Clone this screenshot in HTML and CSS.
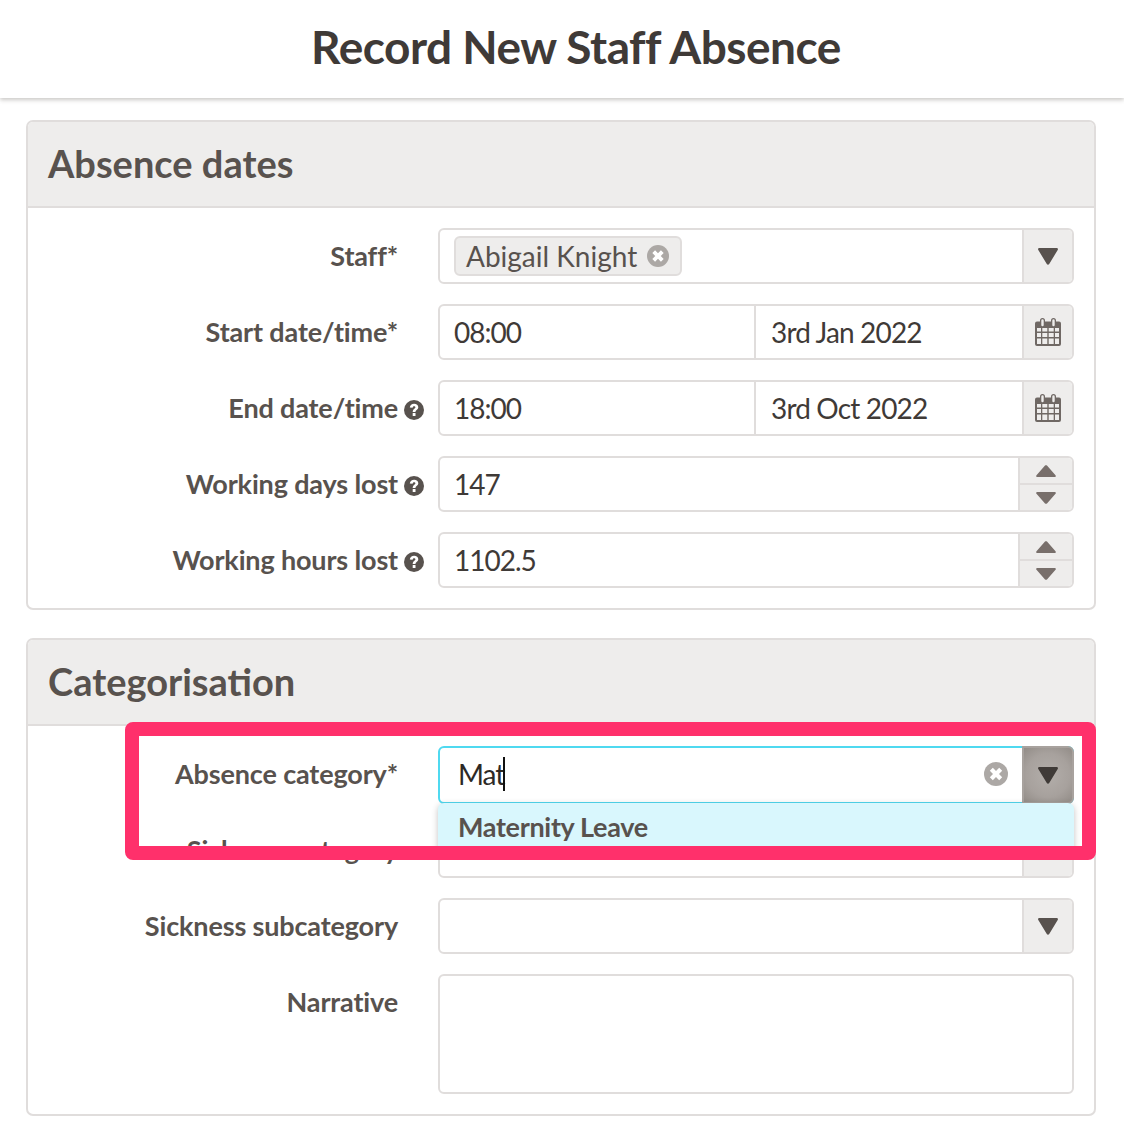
FILE: index.html
```html
<!DOCTYPE html>
<html lang="en">
<head>
<meta charset="utf-8">
<title>Record New Staff Absence</title>
<link rel="stylesheet" href="styles.css">
</head>
<body>
<svg class="defs" width="0" height="0" aria-hidden="true">
  <defs>
    <symbol id="caret" viewBox="0 0 20 17"><path d="M1.500 0H18.500C19.700 0 20.300 1 19.700 2L11.200 16C10.600 17 9.400 17 8.800 16L0.300 2C-0.300 1 0.300 0 1.500 0Z"/></symbol>
    <symbol id="spin-caret" viewBox="0 0 20 12" preserveAspectRatio="none"><path d="M1.500 0H18.500C19.700 0 20.300 1 19.500 1.800L11 11.400C10.400 12 9.600 12 9 11.400L0.500 1.800C-0.300 1 0.300 0 1.500 0Z"/></symbol>
    <symbol id="calendar" viewBox="0 0 26 28">
      <path fill="currentColor" d="M2 3.500H5V2.500a2.500 2.500 0 0 1 5 0V3.500H16V2.500a2.500 2.500 0 0 1 5 0V3.500H24a2 2 0 0 1 2 2V26a2 2 0 0 1-2 2H2a2 2 0 0 1-2-2V5.500a2 2 0 0 1 2-2Z"/>
      <path fill="#eeedec" d="M6.300 2.500a1.200 1.200 0 0 1 2.400 0V7a1.200 1.200 0 0 1-2.400 0ZM17.300 2.500a1.200 1.200 0 0 1 2.400 0V7a1.200 1.200 0 0 1-2.400 0Z"/>
      <path fill="#eeedec" d="M2 10H6V13.500H2ZM7.300 10H12.300V13.500H7.300ZM13.700 10H18.700V13.500H13.700ZM20 10H24V13.500H20ZM2 15H6V19H2ZM7.300 15H12.300V19H7.300ZM13.700 15H18.700V19H13.700ZM20 15H24V19H20ZM2 20.500H6V26H2ZM7.300 20.500H12.300V26H7.300ZM13.700 20.500H18.700V26H13.700ZM20 20.500H24V26H20Z"/>
    </symbol>
    <symbol id="help" viewBox="0 0 20 20">
      <circle cx="10" cy="10" r="10" fill="currentColor"/>
      <path d="M5.800 7.500C6 5 7.800 3.700 10.100 3.700C12.500 3.700 14.300 5.100 14.300 7.200C14.300 9.800 11.500 9.900 11.500 12H8.700C8.700 8.900 11.400 8.900 11.400 7.300C11.400 6.600 10.900 6.200 10 6.200C9.200 6.200 8.700 6.800 8.600 7.800ZM8.700 13.100H11.500V16H8.700Z" fill="#fff"/>
    </symbol>
    <symbol id="clear" viewBox="0 0 24 24">
      <circle cx="12" cy="12" r="12" fill="currentColor"/>
      <path d="M5.800 8.800L8.800 5.800L12 9L15.200 5.800L18.200 8.800L15 12L18.200 15.200L15.200 18.200L12 15L8.800 18.200L5.800 15.200L9 12Z" fill="#fff"/>
    </symbol>
  </defs>
</svg>

<header class="top-bar"><h1 class="page-title">Record New Staff Absence</h1></header>

<main class="content">
  <section class="panel">
    <h2 class="panel-title">Absence dates</h2>
    <div class="panel-body">
      <div class="row">
        <label class="label">Staff*</label>
        <div class="field">
          <div class="value tag-wrap">
            <span class="tag">Abigail Knight<svg class="tag-x"><use href="#clear"/></svg></span>
          </div>
          <span class="addon"><svg class="caret"><use href="#caret"/></svg></span>
        </div>
      </div>
      <div class="row">
        <label class="label">Start date/time*</label>
        <div class="field">
          <div class="value num time">08:00</div>
          <div class="value date">3rd Jan 2022</div>
          <span class="addon"><svg class="cal"><use href="#calendar"/></svg></span>
        </div>
      </div>
      <div class="row">
        <label class="label">End date/time</label>
        <svg class="help"><use href="#help"/></svg>
        <div class="field">
          <div class="value num time">18:00</div>
          <div class="value date">3rd Oct 2022</div>
          <span class="addon"><svg class="cal"><use href="#calendar"/></svg></span>
        </div>
      </div>
      <div class="row">
        <label class="label">Working days lost</label>
        <svg class="help"><use href="#help"/></svg>
        <div class="field">
          <div class="value num">147</div>
          <div class="spinner">
            <span class="spin"><svg class="spin-caret up"><use href="#spin-caret"/></svg></span>
            <span class="spin"><svg class="spin-caret"><use href="#spin-caret"/></svg></span>
          </div>
        </div>
      </div>
      <div class="row">
        <label class="label">Working hours lost</label>
        <svg class="help"><use href="#help"/></svg>
        <div class="field">
          <div class="value num">1102.5</div>
          <div class="spinner">
            <span class="spin"><svg class="spin-caret up"><use href="#spin-caret"/></svg></span>
            <span class="spin"><svg class="spin-caret"><use href="#spin-caret"/></svg></span>
          </div>
        </div>
      </div>
    </div>
  </section>

  <section class="panel">
    <h2 class="panel-title">Categorisation</h2>
    <div class="panel-body">
      <div class="row">
        <label class="label">Absence category*</label>
        <div class="field focused">
          <div class="value typed"><span class="typed-text">Mat</span><span class="cursor"></span></div>
          <svg class="clear"><use href="#clear"/></svg>
          <span class="addon active"><svg class="caret"><use href="#caret"/></svg></span>
          <div class="menu">Maternity Leave</div>
        </div>
      </div>
      <div class="row">
        <label class="label">Sickness category</label>
        <div class="field">
          <div class="value"></div>
          <span class="addon"><svg class="caret"><use href="#caret"/></svg></span>
        </div>
      </div>
      <div class="row">
        <label class="label">Sickness subcategory</label>
        <div class="field">
          <div class="value"></div>
          <span class="addon"><svg class="caret"><use href="#caret"/></svg></span>
        </div>
      </div>
      <div class="row row-tall">
        <label class="label">Narrative</label>
        <div class="field"><div class="value"></div></div>
      </div>
    </div>
  </section>
</main>

<div class="highlight"></div>
</body>
</html>
```

FILE: styles.css
```css
* { box-sizing: border-box; }
html, body { margin: 0; padding: 0; }
body {
  position: relative;
  width: 1124px;
  height: 1130px;
  overflow: hidden;
  background: #fff;
  font-family: "Lato", "Open Sans", sans-serif;
  color: #3f3a37;
}
.defs { position: absolute; }

.top-bar {
  height: 98px;
  background: #fff;
  display: flex;
  align-items: center;
  justify-content: center;
  box-shadow: 0 2px 4px rgba(70, 60, 55, 0.28);
  padding: 0 0 4px 28px;
}
.page-title {
  margin: 0;
  font-size: 46px;
  letter-spacing: -0.5px;
  line-height: 1;
  font-weight: 700;
  color: #3f3a37;
}

.content {
  padding: 22px 28px 0 26px;
  display: flex;
  flex-direction: column;
  gap: 28px;
}
.panel {
  border: 2px solid #e0dddc;
  border-radius: 7px;
  overflow: hidden;
}
.panel-title {
  margin: 0;
  height: 86px;
  padding: 0 20px 2px;
  display: flex;
  align-items: center;
  background: #eeedec;
  border-bottom: 2px solid #e0dddc;
  font-size: 38px;
  font-weight: 700;
  color: #58524e;
}
.panel-body {
  padding: 20px 20px 20px 0;
  display: flex;
  flex-direction: column;
  gap: 20px;
}

.row {
  display: grid;
  grid-template-columns: 370px 40px 636px;
  height: 56px;
}
.row-tall { height: 120px; }
.label {
  grid-column: 1;
  grid-row: 1;
  text-align: right;
  font-size: 27px;
  letter-spacing: -0.15px;
  line-height: 56px;
  font-weight: 700;
  color: #58524e;
}
.help {
  grid-column: 2;
  grid-row: 1;
  width: 20px;
  height: 20px;
  margin: 20px 0 0 6px;
  color: #58524e;
}
.field {
  grid-column: 3;
  grid-row: 1;
  position: relative;
  display: flex;
  border: 2px solid #e0dddc;
  border-radius: 6px;
  background: #fff;
}
.value {
  flex: 1;
  padding: 0 14px;
  font-size: 28px;
  line-height: 52px;
  color: #3f3a37;
  min-width: 0;
}
.value.num { letter-spacing: -1px; }
.value.date {
  letter-spacing: -0.85px;
  padding-left: 15px;
}
.value.time {
  flex: 0 0 316px;
  border-right: 2px solid #e0dddc;
}
.tag-wrap {
  display: flex;
  align-items: center;
}
.tag {
  height: 40px;
  display: inline-flex;
  align-items: center;
  gap: 10px;
  padding: 0 11px 0 10px;
  border: 2px solid #e0dddc;
  border-radius: 6px;
  background: #eeedec;
  color: #58524e;
}
.tag-x {
  width: 22px;
  height: 22px;
  color: #aca8a5;
}
.addon {
  flex: 0 0 50px;
  display: flex;
  align-items: center;
  justify-content: center;
  border-left: 2px solid #e0dddc;
  background: #eeedec;
  border-radius: 0 4px 4px 0;
}
.caret {
  width: 20px;
  height: 17px;
  fill: #58524e;
}
.cal {
  width: 26px;
  height: 28px;
  color: #6f6864;
}
.spinner {
  flex: 0 0 54px;
  display: flex;
  flex-direction: column;
  border-left: 2px solid #e0dddc;
  background: #eeedec;
  border-radius: 0 4px 4px 0;
}
.spin {
  flex: 1;
  display: flex;
  align-items: center;
  justify-content: center;
}
.spin:first-child { border-bottom: 2px solid #e0dddc; }
.spin-caret {
  width: 20px;
  height: 12px;
  fill: #786f6b;
}
.spin-caret.up { transform: scaleY(-1); }

.focused {
  border-color: #4fd9f0;
  z-index: 2;
}
.typed {
  display: flex;
  align-items: center;
  padding: 0 0 2px 18px;
  color: #2d2926;
}
.typed-text { letter-spacing: -1px; }
.cursor {
  width: 2px;
  height: 34px;
  background: #111;
  margin-left: -1px;
}
.clear {
  align-self: center;
  width: 24px;
  height: 24px;
  margin: 0 14px 2px 0;
  color: #aca8a5;
}
.addon.active {
  margin: -2px -2px -2px 0;
  flex-basis: 52px;
  border: 2px solid #a8a29e;
  border-radius: 0 6px 6px 0;
  background: radial-gradient(circle, #b3aeaa 0%, #a7a19d 60%, #928c87 100%);
}
.addon.active .caret { fill: #3f3a37; }
.menu {
  position: absolute;
  top: 55px;
  left: -2px;
  width: 636px;
  height: 48px;
  padding: 0 20px;
  background: #d9f7fd;
  border-radius: 6px 6px 0 0;
  box-shadow: 0 2px 6px rgba(60, 50, 45, 0.3);
  font-size: 27px;
  letter-spacing: -0.33px;
  font-weight: 700;
  line-height: 47px;
  color: #58524e;
}

.highlight {
  position: absolute;
  left: 125px;
  top: 722px;
  width: 971px;
  height: 138px;
  border: 14px solid #ff306b;
  border-radius: 8px;
  z-index: 3;
}
```
